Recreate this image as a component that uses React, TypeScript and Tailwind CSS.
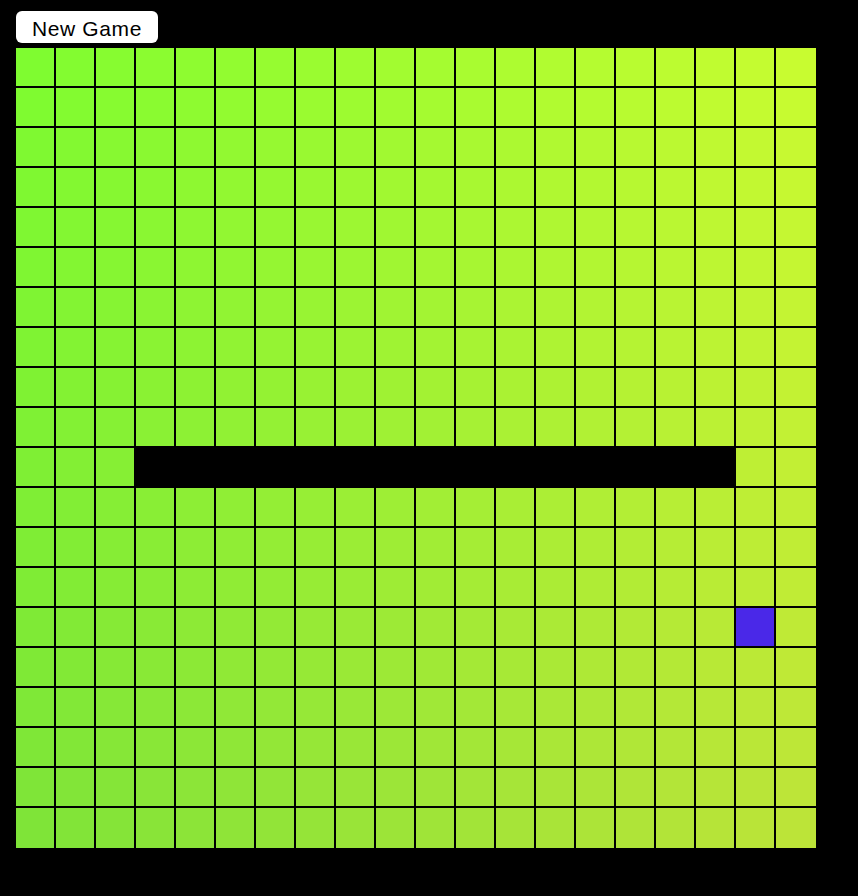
import React from 'react';

const SIZE = 20;

// wall cells (row 10, cols 3..17) and the player cell
const isWall = (r: number, c: number) => r === 10 && c >= 3 && c <= 17;
const isPlayer = (r: number, c: number) => r === 14 && c === 18;

const cellColor = (r: number, c: number) => {
  const x = c / (SIZE - 1);
  const y = r / (SIZE - 1);
  const red = Math.round(127 + 73 * x - 12 * x * y);
  const green = Math.round(252 - 24 * y);
  const blue = Math.round(48 + 8 * y);
  return `rgb(${red}, ${green}, ${blue})`;
};

const App: React.FC = () => {
  const rows = Array.from({ length: SIZE }, (_, i) => i);

  return (
    <div className="min-h-screen w-full bg-black pl-[16px] pt-[11px]" style={{ fontFamily: '"Liberation Sans", Arial, sans-serif' }}>
      <button className="flex h-[32px] w-[142px] items-center justify-center rounded-[6px] bg-white pt-[3px] text-[21px] tracking-[0.6px] text-black">
        New Game
      </button>

      {/* board */}
      <div className="mt-[5px] flex flex-col gap-[2px]">
        {rows.map((r) => (
          <div key={r} className={`flex gap-[2px] ${r === SIZE - 1 ? 'h-[40px]' : 'h-[38px]'}`}>
            {rows.map((c) => {
              const wall = isWall(r, c);
              const player = isPlayer(r, c);
              return (
                <div
                  key={c}
                  className={`h-full ${c === SIZE - 1 ? 'w-[40px]' : 'w-[38px]'} ${
                    wall ? 'bg-black' : player ? 'bg-[#4a28e8]' : ''
                  }`}
                  style={wall || player ? undefined : { backgroundColor: cellColor(r, c) }}
                />
              );
            })}
          </div>
        ))}
      </div>
    </div>
  );
};

export default App;
